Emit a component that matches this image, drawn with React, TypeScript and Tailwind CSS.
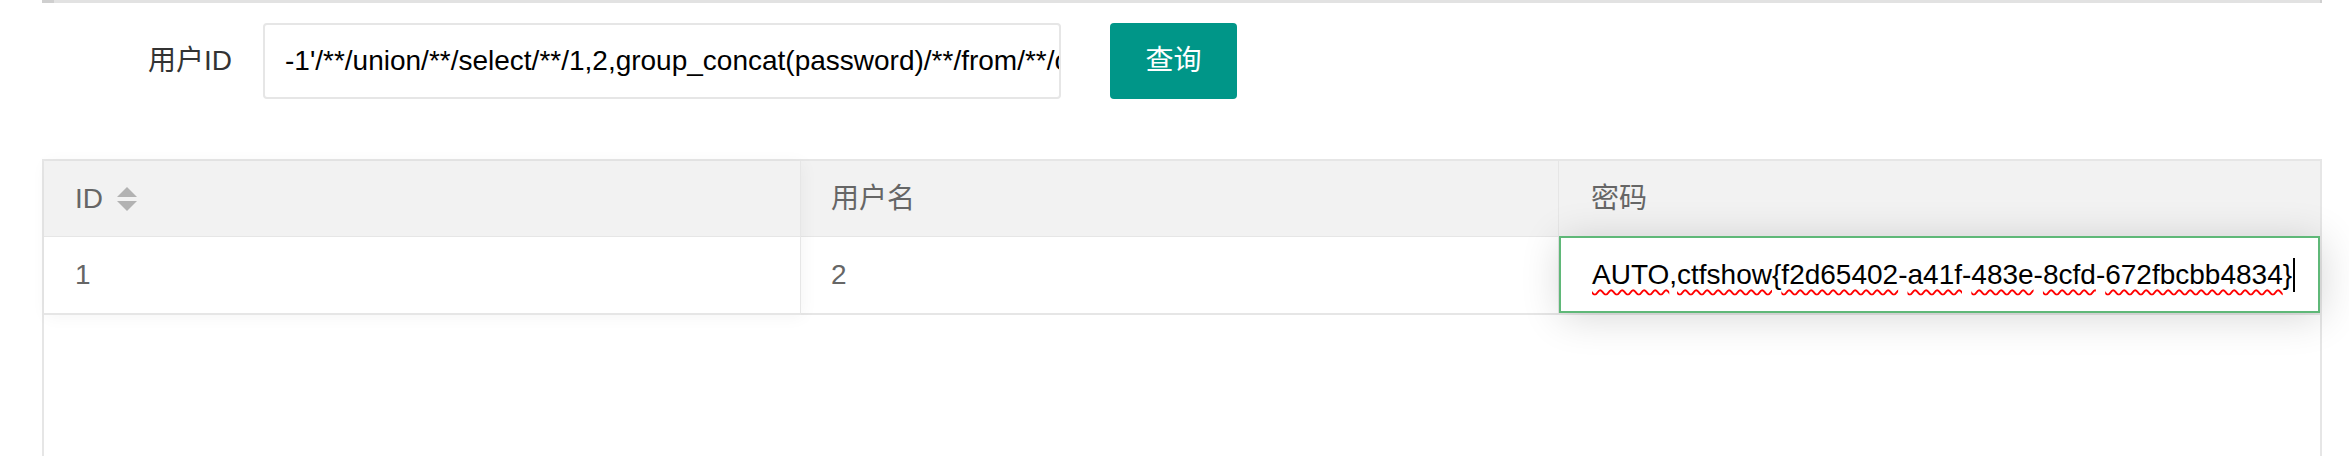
import React from "react";

const tokens: { t: string; bad?: boolean }[] = [
  { t: "AUTO", bad: true },
  { t: "," },
  { t: "ctfshow", bad: true },
  { t: "{" },
  { t: "f2d65402", bad: true },
  { t: "-" },
  { t: "a41f", bad: true },
  { t: "-" },
  { t: "483e", bad: true },
  { t: "-" },
  { t: "8cfd", bad: true },
  { t: "-" },
  { t: "672fbcbb4834", bad: true },
  { t: "}" },
];

export default function App() {
  return (
    <div className="w-[2349px] h-[456px] bg-white overflow-hidden font-['Liberation_Sans','Noto_Sans_CJK_SC',sans-serif]">
      {/* bottom edge of the card above */}
      <div className="ml-[42px] w-[2280px] h-[3px] bg-[#e2e2e2] flex justify-between">
        <div className="w-[12px] bg-[#cfcfcf]" />
        <div className="w-[2px] bg-[#cfcfcf]" />
      </div>

      {/* search form */}
      <div className="flex items-center mt-[20px] ml-[43px] h-[76px]">
        <label className="w-[220px] pr-[31px] text-right text-[28px] text-[#333] leading-[76px]">用户ID</label>
        <input
          readOnly
          value="-1'/**/union/**/select/**/1,2,group_concat(password)/**/from/**/ctfshow_user/**/where/**/username='flag'"
          className="w-[798px] h-[76px] border-2 border-[#e6e6e6] rounded-[4px] pl-[20px] text-[28px] text-black outline-none bg-white"
        />
        <button className="ml-[49px] w-[127px] h-[76px] bg-[#009688] rounded-[4px] text-white text-[28px]">查询</button>
      </div>

      {/* table */}
      <div className="relative mt-[60px] ml-[42px] w-[2280px] h-[300px] border-x-2 border-t-2 border-[#e6e6e6] text-[28px] text-[#666]">
        <div className="flex h-[76px] bg-[#f2f2f2] border-b border-[#e6e6e6]">
          <div className="w-[757px] border-r border-[#e6e6e6] flex items-center pl-[31px] gap-[14px]">
            <span>ID</span>
            <span className="flex flex-col gap-[4px]">
              <span className="w-0 h-0 border-x-[10px] border-x-transparent border-b-[10px] border-b-[#b2b2b2]" />
              <span className="w-0 h-0 border-x-[10px] border-x-transparent border-t-[10px] border-t-[#b2b2b2]" />
            </span>
          </div>
          <div className="w-[758px] border-r border-[#e6e6e6] flex items-center pl-[30px]">用户名</div>
          <div className="flex-1 flex items-center pl-[32px]">密码</div>
        </div>
        <div className="flex h-[78px] border-b-2 border-[#e6e6e6] bg-white">
          <div className="w-[757px] border-r border-[#e6e6e6] flex items-center pl-[31px]">1</div>
          <div className="w-[758px] border-r border-[#e6e6e6] flex items-center pl-[30px]">2</div>
          <div className="relative flex-1">
            <div className="absolute -top-[1px] left-0 right-0 bottom-0 z-20 bg-white border-2 border-[#5FB878] shadow-[2px_4px_40px_rgba(0,0,0,0.16)] flex items-center pl-[31px] text-black">
              {tokens.map((k, i) => (
                <span
                  key={i}
                  className={k.bad ? "underline decoration-wavy decoration-[#ff0000] decoration-2 underline-offset-[5px]" : ""}
                >
                  {k.t}
                </span>
              ))}
              <span className="ml-[1px] w-[2px] h-[34px] bg-black" />
            </div>
          </div>
        </div>

        {/* fixed left column shadow */}
        <div className="absolute left-0 top-0 w-[757px] h-[154px] z-10 pointer-events-none shadow-[2px_2px_16px_rgba(0,0,0,0.045)]" />
      </div>
    </div>
  );
}
